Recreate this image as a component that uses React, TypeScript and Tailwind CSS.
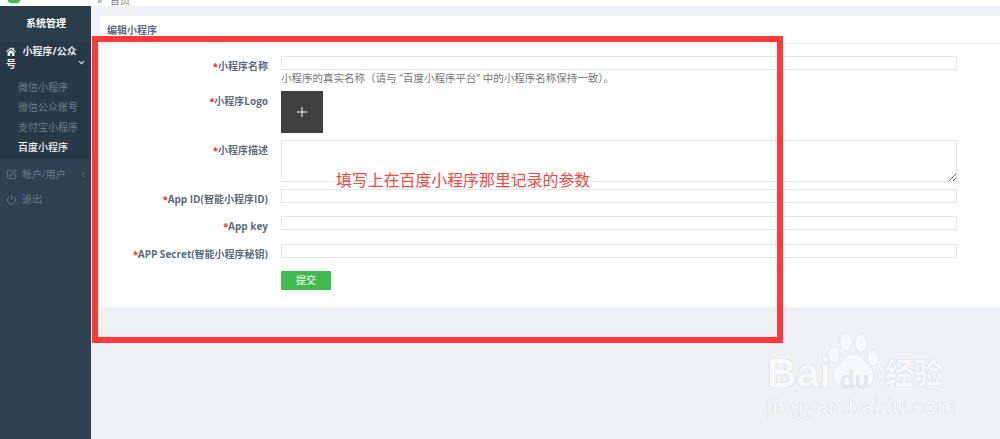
import { Edit, Power, ChevronDown, ChevronLeft, Plus } from "lucide-react";

const FONT = { fontFamily: '"Open Sans","Noto Sans CJK SC",sans-serif' };

function Field({ label, className, children }: { label: string; className: string; children: React.ReactNode }) {
  return (
    <div className={`flex ${className}`}>
      <label className="w-[168px] shrink-0 pt-[3px] whitespace-nowrap text-right text-[10px] leading-[14px] font-bold text-[#5f6b78]">
        <span className="text-[9px] text-[#f0262a]">*</span>
        {label}
      </label>
      <div className="ml-[13px] w-[676px]">{children}</div>
    </div>
  );
}

const inputCls = "block h-[14px] w-full border border-[#e5e6e7] bg-white";

export default function App() {
  return (
    <div className="relative flex h-[439px] w-[1000px] flex-col overflow-hidden bg-white" style={FONT}>
      {/* clipped top bar */}
      <div className="flex h-[6px] shrink-0 overflow-hidden bg-white">
        <div className="ml-[8px] h-[3px] w-[12px] rounded-b-sm bg-[#3fb950]" />
        <span className="ml-[77px] -mt-[6px] flex gap-[8px] text-[10px] leading-[12px] text-[#777]">
          <span>»</span>
          <span>首页</span>
        </span>
      </div>
      <div className="flex min-h-0 flex-1">
        <aside className="flex w-[91px] shrink-0 flex-col bg-[#2f4050] text-[10px]">
          <div className="bg-[#2b3c4b] pt-[10px] pb-[12px] pl-[26px] text-[10px] leading-[14px] font-bold text-white">系统管理</div>
          <div className="bg-[#293846] pb-[5px]">
            <div className="relative pt-[3px] pr-[6px] pl-[6px] text-[10px] leading-[13px] font-bold text-[#e8ecef]">
              <svg viewBox="0 0 16 14" className="mr-[4px] inline-block h-[9px] w-[10px] fill-current align-[-1px]">
                <path d="M8 0 0 7l1 1.2L8 2.4l7 5.8L16 7l-3-2.6V1h-2v1.7zM2.5 8.6V14h4v-4h3v4h4V8.6L8 4z" />
              </svg>
              <span> 小程序/公众号</span>
              <ChevronDown className="absolute right-[5px] top-[16px] h-[9px] w-[9px]" strokeWidth={3} />
            </div>
            <ul className="mt-[9px] flex flex-col gap-[6px] pl-[18px] leading-[14px] text-[#6d7f8c]">
              <li>微信小程序</li>
              <li>微信公众账号</li>
              <li>支付宝小程序</li>
              <li className="font-medium text-[#f0f3f5]">百度小程序</li>
            </ul>
          </div>
          <div className="flex items-center pt-[8px] pl-[6px] leading-[14px] text-[#6d7f8c]">
            <Edit className="h-[11px] w-[11px]" />
            <span className="ml-[5px]">帐户/用户</span>
            <ChevronLeft className="ml-[13px] h-[9px] w-[9px]" />
          </div>
          <div className="flex items-center pt-[11px] pl-[6px] leading-[14px] text-[#6d7f8c]">
            <Power className="h-[11px] w-[11px]" />
            <span className="ml-[5px]">退出</span>
          </div>
        </aside>
        <main className="min-w-0 flex-1 bg-[#eff1f5] pt-[10px] pl-[9px]">
          <section className="h-[291px] bg-white">
            <h2 className="h-[28px] border-b border-[#eceef1] pt-[7px] pl-[7px] text-[10px] leading-[14px] font-bold text-[#5f6b78]">
              编辑小程序
            </h2>
            <form className="pt-[12px]">
              <Field label="小程序名称" className="">
                <div className={inputCls} />
                <p className="mt-[2px] text-[10.5px] leading-[13px] whitespace-nowrap text-[#777]">
                  小程序的真实名称（请与 “百度小程序平台” 中的小程序名称保持一致）。
                </p>
              </Field>
              <Field label="小程序Logo" className="mt-[6px]">
                <div className="flex h-[42px] w-[42px] items-center justify-center bg-[#3f3f3f] text-white">
                  <Plus className="h-[16px] w-[16px]" strokeWidth={1.5} />
                </div>
              </Field>
              <Field label="小程序描述" className="mt-[7px]">
                <div className={`${inputCls} relative !h-[42px]`}>
                  <svg viewBox="0 0 8 8" className="absolute right-0 bottom-0 h-[8px] w-[8px]" stroke="#555" strokeWidth="0.8">
                    <path d="M1 8l7-7M5 8l3-3" />
                  </svg>
                </div>
              </Field>
              <Field label="App ID(智能小程序ID)" className="mt-[7px]">
                <div className={inputCls} />
              </Field>
              <Field label="App key" className="mt-[9px]">
                <div className={inputCls} />
              </Field>
              <Field label="APP Secret(智能小程序秘钥)" className="mt-[10px]">
                <div className={inputCls} />
              </Field>
              <div className="mt-[9px] ml-[181px] flex h-[19px] w-[50px] items-center justify-center rounded-[1px] bg-[#3fb950] text-[10px] text-white">
                提交
              </div>
            </form>
          </section>
        </main>
      </div>

      {/* annotation overlay */}
      <div className="pointer-events-none absolute left-[92px] top-[36px] h-[307px] w-[691px] border-[6px] border-[#ff3838]">
        <div className="absolute top-0 right-0 bottom-0 w-[1px] bg-white" />
      </div>
      <span className="absolute left-[336px] top-[170px] text-[15.9px] leading-[20px] text-[#f5483f]">
        填写上在百度小程序那里记录的参数
      </span>

      {/* watermark */}
      <div className="pointer-events-none absolute left-[767px] top-[332px] h-[90px] w-[190px] text-[#f8f9fb] [text-shadow:0_0_1px_#b4b7be]">
        <svg viewBox="0 0 52 56" className="absolute left-[61px] top-0 h-[56px] w-[52px]" fill="#f8f9fb" stroke="#dfe1e6" strokeWidth="0.6">
          <ellipse cx="18" cy="10" rx="6" ry="9" />
          <ellipse cx="33" cy="11" rx="6" ry="9" />
          <ellipse cx="6" cy="23" rx="5.5" ry="8" />
          <ellipse cx="45" cy="26" rx="5.5" ry="8" />
          <path d="M26 22c7 0 9 6 14 10 8 6 9 23-6 23-4 0-6-1-8-1s-5 2-10 1C2 54 3 38 11 32c6-4 8-10 15-10z" />
        </svg>
        <div className="flex pt-[23px]" style={{ fontFamily: '"Liberation Sans",sans-serif' }}>
          <span className="h-[36px] text-[41px] leading-[36px] font-bold">Bai</span>
          <span className="relative ml-[9px] mt-[13px] h-[24px] w-[36px] text-[24px] leading-[24px] font-bold text-[#e2e4e9] [text-shadow:none]">du</span>
          <span className="relative ml-[9px] h-[36px] text-[29px] leading-[36px] font-bold" style={FONT}>经验</span>
        </div>
        <div className="mt-[3px] text-[22px] leading-[24px] tracking-[0.7px]" style={{ fontFamily: '"Liberation Sans",sans-serif' }}>
          jingyan.baidu.com
        </div>
      </div>
    </div>
  );
}
